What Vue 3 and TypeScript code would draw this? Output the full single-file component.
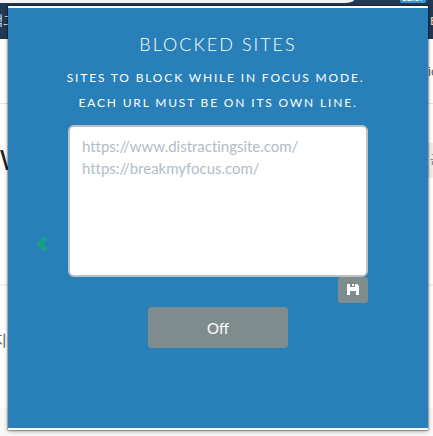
<script setup lang="ts">
import { ref } from 'vue'

const sites = ref('')
const enabled = ref(false)
const placeholder = 'https://www.distractingsite.com/\nhttps://breakmyfocus.com/'
</script>

<template>
  <div class="screen">
    <div class="page">
      <div class="toolbar"><div class="address"></div></div>
      <div class="nav"></div>
      <div class="subnav"></div>
      <div class="hero"></div>
      <div class="list"></div>
      <div class="foot"></div>
      <span class="frag badge">12:17</span>
      <span class="frag menu-left">색그</span>
      <span class="frag menu-right">E</span>
      <span class="frag heading">W</span>
      <span class="frag item-left">지</span>
      <span class="frag item-right">ic</span>
      <span class="frag tag">근</span>
    </div>
    <main class="popup">
      <h1 class="title">Blocked Sites</h1>
      <p class="hint">Sites to block while in focus mode.&nbsp;<br />Each URL must be on its own line.</p>
      <div class="row">
        <button class="back" aria-label="Back">
          <svg width="12" height="16" viewBox="0 0 12 16"><path d="M8.7 0 12 3.2 7 8l5 4.8L8.7 16 0 8z" /></svg>
        </button>
        <textarea v-model="sites" class="editor" :placeholder="placeholder"></textarea>
      </div>
      <div class="actions">
        <button class="save" aria-label="Save">
          <svg width="12" height="11" viewBox="0 0 12 11">
            <path fill-rule="evenodd" d="M0 0h3v3h5V0h2l2 2v9H9V7H3v4H0z M5 0h2v2H5z" />
          </svg>
        </button>
      </div>
      <button class="toggle" @click="enabled = !enabled">{{ enabled ? 'On' : 'Off' }}</button>
    </main>
  </div>
</template>

<style>
body {
  overflow: hidden;
}
</style>

<style scoped>
.screen {
  position: relative;
  width: 433px;
  height: 436px;
  overflow: hidden;
  background: #fff;
  font-family: Lato, "Noto Sans CJK KR", sans-serif;
}
.page {
  display: flex;
  flex-direction: column;
  height: 100%;
}
.toolbar {
  height: 3px;
  background: #213a57;
}
.address {
  width: 354px;
  height: 3px;
  background: #f1f3f4;
  border-bottom-right-radius: 10px 3px;
}
.nav {
  height: 36px;
  background: #213a54;
}
.subnav {
  height: 64px;
  background: #fff;
  border-bottom: 1px solid #e4e4e4;
  box-shadow: 0 1px 4px rgba(0, 0, 0, 0.13);
}
.hero {
  height: 180px;
  background: #fff;
  border-bottom: 2px solid #f1f1f1;
}
.list {
  height: 122px;
}
.foot {
  flex: 1;
  background: #f8f8f8;
}
.frag {
  position: absolute;
  white-space: nowrap;
}
.badge {
  left: 400px;
  top: -9px;
  width: 26px;
  height: 12px;
  border-radius: 2px;
  background: #3498db;
  color: #fff;
  font-size: 9px;
  line-height: 14px;
  text-align: center;
}
.menu-left {
  left: -9px;
  top: 11px;
  color: #d5dce3;
  font-size: 13px;
  line-height: 18px;
}
.menu-right {
  left: 430px;
  top: 12px;
  color: #e7dcc0;
  font-size: 12px;
  line-height: 17px;
}
.heading {
  left: 0;
  top: 140px;
  color: #222;
  font: 29px/40px "Liberation Sans", sans-serif;
}
.item-left {
  left: -7px;
  top: 330px;
  color: #666;
  font-size: 15px;
  line-height: 20px;
}
.item-right {
  left: 428px;
  top: 63px;
  color: #555;
  font: 13px/17px "Liberation Sans", sans-serif;
}
.tag {
  left: 422px;
  top: 143px;
  width: 20px;
  height: 35px;
  padding-left: 8px;
  background: #eee;
  color: #777;
  font-size: 12px;
  line-height: 34px;
}
.popup {
  position: absolute;
  left: 8px;
  top: 6px;
  box-sizing: border-box;
  width: 420px;
  height: 424px;
  display: flex;
  flex-direction: column;
  align-items: center;
  border: solid #fff;
  border-width: 2px 0;
  border-radius: 1px;
  background: #2980b9;
  box-shadow: 0 0 1px 1px rgba(0, 0, 0, 0.25), 0 1px 4px rgba(0, 0, 0, 0.4);
  color: #fff;
  font-variant-ligatures: none;
}
.title {
  margin: 24px 0 0;
  font-size: 18px;
  font-weight: 300;
  line-height: 24px;
  letter-spacing: 2px;
  text-transform: uppercase;
}
.hint {
  margin: 9px 0 0;
  font-size: 12px;
  line-height: 25px;
  letter-spacing: 1.83px;
  text-align: center;
  text-transform: uppercase;
  white-space: nowrap;
}
button {
  border: 0;
  font-family: inherit;
}
.row {
  display: flex;
  width: 332px;
  margin: 10px 32px 0 0;
}
.back {
  width: 32px;
  height: 16px;
  margin-top: 111px;
  padding: 0;
  background: none;
  text-align: left;
}
.back svg {
  display: block;
  fill: #16a085;
}
.editor {
  box-sizing: border-box;
  width: 300px;
  height: 152px;
  padding: 8px 12px;
  border: 2px solid #bdc1c3;
  border-radius: 6px;
  outline: none;
  resize: none;
  background: #fff;
  color: #34495e;
  font: 15px/22px Lato, sans-serif;
  font-variant-ligatures: none;
  letter-spacing: -0.02px;
}
.editor::placeholder {
  color: #b2bcc5;
}
.actions {
  display: flex;
  justify-content: flex-end;
  width: 300px;
}
.save {
  display: flex;
  align-items: center;
  justify-content: center;
  width: 30px;
  height: 26px;
  padding: 0 1px 1px 0;
  border-radius: 3px;
  background: #7f8c8d;
}
.save svg {
  fill: #fff;
}
.toggle {
  width: 140px;
  height: 41px;
  margin-top: 4px;
  padding: 0;
  border-radius: 4px;
  background: #7f8c8d;
  color: #fff;
  font-size: 15px;
}
</style>
